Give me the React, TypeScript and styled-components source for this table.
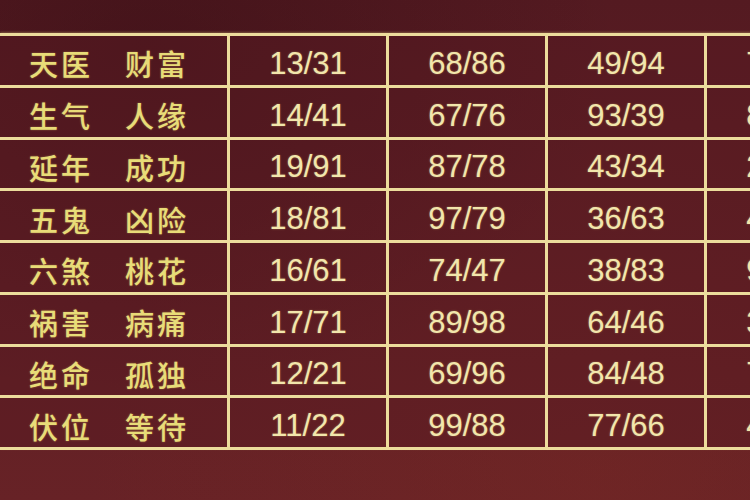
import React from "react";
import styled, { createGlobalStyle } from "styled-components";

const Global = createGlobalStyle`
  html, body { margin: 0; padding: 0; }
  body {
    width: 750px;
    height: 500px;
    overflow: hidden;
    background: #5c1d23;
  }
`;

const Page = styled.div`
  width: 750px;
  height: 500px;
  overflow: hidden;
  padding-top: 33px;
  box-sizing: border-box;
  background:
    radial-gradient(ellipse at 20% 10%, rgba(40, 8, 14, 0.35), transparent 55%),
    radial-gradient(ellipse at 80% 95%, rgba(130, 45, 35, 0.3), transparent 60%),
    linear-gradient(180deg, #541a21 0%, #5e1e24 50%, #672226 100%);
`;

const Table = styled.div`
  display: grid;
  grid-template-columns: 230px repeat(4, 159px);
  grid-auto-rows: 51.75px;
  width: 866px;
  border-top: 3px solid #ecdc9c;
  box-shadow: 0 -1px 2px rgba(240, 230, 140, 0.3);
`;

const Cell = styled.div<{ $first?: boolean }>`
  box-sizing: border-box;
  border-bottom: 3px solid #ecdc9c;
  border-right: 3px solid #ecdc9c;
  display: flex;
  align-items: center;
  justify-content: ${(p) => (p.$first ? "flex-start" : "center")};
  padding-left: ${(p) => (p.$first ? "29px" : "0")};
  padding-top: 7px;
  background: rgba(88, 26, 34, 0.5);
`;

const Num = styled.span`
  font-family: "Liberation Sans", Arial, sans-serif;
  font-size: 31px;
  color: #f2e6ac;
  text-shadow: 0 0 2px rgba(255, 240, 150, 0.4);
`;

const Label = styled.span`
  font-family: "Noto Sans CJK SC", "Noto Sans", sans-serif;
  font-size: 29px;
  font-weight: 500;
  line-height: 1;
  color: #e8dc78;
  letter-spacing: 3px;
  text-shadow: 0 0 2px rgba(255, 240, 120, 0.4);
`;

const Meaning = styled(Label)`
  margin-left: 32px;
`;

const rows: [string, string, string[]][] = [
  ["天医", "财富", ["13/31", "68/86", "49/94", "72/27"]],
  ["生气", "人缘", ["14/41", "67/76", "93/39", "82/28"]],
  ["延年", "成功", ["19/91", "87/78", "43/34", "26/62"]],
  ["五鬼", "凶险", ["18/81", "97/79", "36/63", "42/24"]],
  ["六煞", "桃花", ["16/61", "74/47", "38/83", "92/29"]],
  ["祸害", "病痛", ["17/71", "89/98", "64/46", "32/23"]],
  ["绝命", "孤独", ["12/21", "69/96", "84/48", "73/37"]],
  ["伏位", "等待", ["11/22", "99/88", "77/66", "44/33"]],
];

export default function App() {
  return (
    <>
      <Global />
      <Page>
        <Table>
          {rows.map(([a, b, nums]) => (
            <React.Fragment key={a}>
              <Cell $first>
                <Label>{a}</Label>
                <Meaning>{b}</Meaning>
              </Cell>
              {nums.map((n) => (
                <Cell key={n}>
                  <Num>{n}</Num>
                </Cell>
              ))}
            </React.Fragment>
          ))}
        </Table>
      </Page>
    </>
  );
}
